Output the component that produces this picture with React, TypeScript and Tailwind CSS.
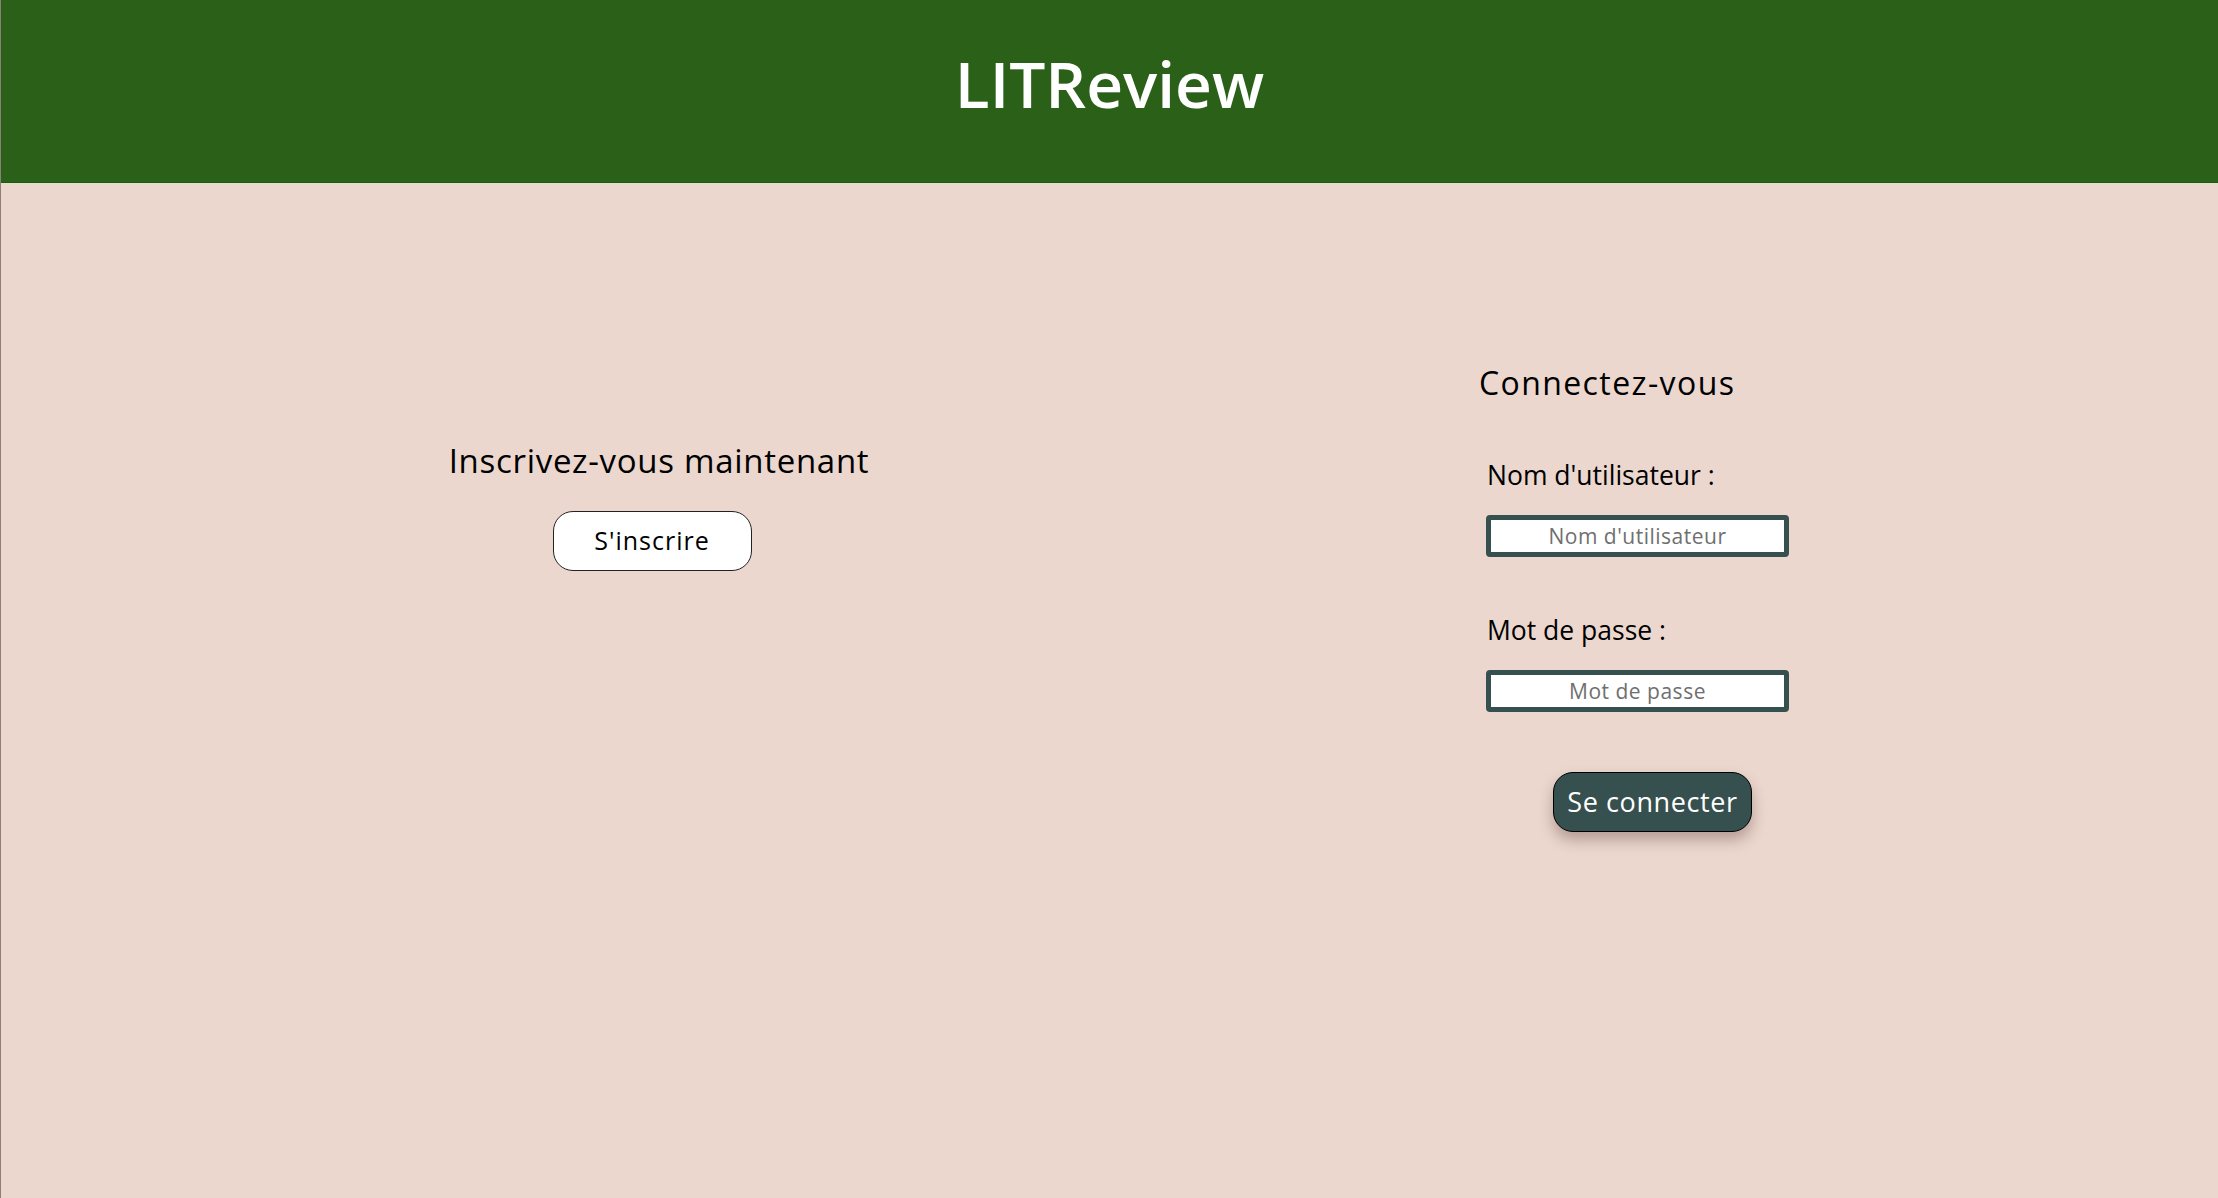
const font = { fontFamily: '"Open Sans", "DejaVu Sans", sans-serif' };

function Field({ label, placeholder, type }: { label: string; placeholder: string; type: string }) {
  return (
    <div className="flex flex-col">
      <label className="ml-[8px] text-[26.5px] leading-[32px] text-black">{label}</label>
      <input
        type={type}
        placeholder={placeholder}
        className="mt-[24px] ml-[7px] h-[42px] w-[303px] rounded-[4px] border-[5px] border-[#364f4f] bg-white text-center text-[21px] tracking-[0.5px] text-black outline-none placeholder:text-[#6f6f6f]"
        style={font}
      />
    </div>
  );
}

export default function App() {
  return (
    <div className="min-h-[1198px] border-l border-[#8c7f77] bg-[#ebd7ce]" style={font}>
      <header className="flex h-[183px] items-center justify-center border-b border-[#16600f] bg-[#2b6019] pb-[14px]">
        <h1 className="text-[64px] font-semibold leading-none text-white">LITReview</h1>
      </header>

      <main className="flex items-start">
        {/* sign up */}
        <section className="ml-[447px] mt-[258px] flex w-[422px] flex-col items-center">
          <h2 className="whitespace-nowrap text-[33px] leading-[40px] tracking-[0.7px] text-black">Inscrivez-vous maintenant</h2>
          <button className="mt-[30px] mr-[14px] h-[60px] w-[199px] rounded-[20px] border border-[#222] bg-white text-[25px] tracking-[1px] text-black">
            S'inscrire
          </button>
        </section>

        {/* sign in */}
        <section className="ml-[609px] mt-[180px] flex flex-col">
          <h2 className="whitespace-nowrap text-[32px] leading-[40px] tracking-[1.4px] text-black">Connectez-vous</h2>
          <form className="mt-[56px] flex flex-col" onSubmit={(e) => e.preventDefault()}>
            <Field label="Nom d'utilisateur :" placeholder="Nom d'utilisateur" type="text" />
            <div className="mt-[57px]">
              <Field label="Mot de passe :" placeholder="Mot de passe" type="password" />
            </div>
            <button
              type="submit"
              className="mt-[60px] ml-[74px] h-[60px] w-[199px] rounded-[20px] border border-black bg-[#364f4f] text-[27px] tracking-[0.6px] text-white shadow-[0_8px_14px_rgba(80,50,40,0.35)]"
            >
              Se connecter
            </button>
          </form>
        </section>
      </main>
    </div>
  );
}
